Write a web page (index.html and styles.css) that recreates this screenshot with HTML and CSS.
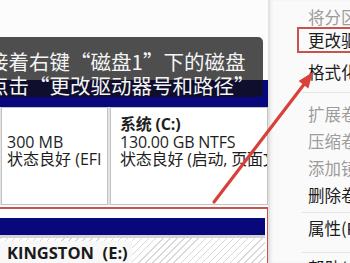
FILE: index.html
```html
<!DOCTYPE html>
<html lang="zh-CN">
<head>
<meta charset="utf-8">
<title>磁盘管理</title>
<link rel="stylesheet" href="styles.css">
</head>
<body>
<div class="screen">
  <div class="disks">
    <div class="top-space"></div>
    <div class="bar"></div>
    <div class="parts">
      <div class="part efi">
        <div class="line">&nbsp;</div>
        <div class="line">300 MB</div>
        <div class="line">状态良好 (EFI</div>
      </div>
      <div class="part sys">
        <div class="line bold">系统 (C:)</div>
        <div class="line">130.00 GB NTFS</div>
        <div class="line">状态良好 (启动, 页面文件, 故障转储, 基本数据分区)</div>
      </div>
    </div>
    <div class="disk2">
      <div class="bar bar2"></div>
      <div class="hatch">
        <span class="label">KINGSTON  (E:)</span>
      </div>
    </div>
  </div>
  <div class="menu">
    <div class="item dis first">将分区标记为活动分区(M)</div>
    <div class="item hl">更改驱动器号和路径(C)...</div>
    <div class="item third">格式化(F)...</div>
    <div class="sep s1"></div>
    <div class="item dis">扩展卷(X)...</div>
    <div class="item dis">压缩卷(H)...</div>
    <div class="item dis">添加镜像(A)...</div>
    <div class="item">删除卷(D)...</div>
    <div class="sep s2"></div>
    <div class="item">属性(P)</div>
    <div class="sep s3"></div>
    <div class="item">帮助(H)</div>
  </div>
  <div class="caption">
    <div class="cap-line">接着右键“磁盘1”下的磁盘</div>
    <div class="cap-line">点击“更改驱动器号和路径”</div>
  </div>
  <svg class="arrow" width="350" height="263" viewBox="0 0 350 263">
    <line x1="214" y1="202" x2="303.5" y2="85" stroke="#d8413a" stroke-width="3.2" stroke-linecap="round"/>
    <polygon points="313,72 308.3,88.4 298.6,81" fill="#d8413a"/>
  </svg>
</div>
</body>
</html>
```
FILE: styles.css
```css
html, body {
  margin: 0;
  padding: 0;
}
body {
  width: 350px;
  height: 263px;
  overflow: hidden;
  background: #fbfbfb;
}
.screen {
  position: relative;
  display: flex;
  width: 350px;
  height: 263px;
  overflow: hidden;
}
.disks {
  width: 268px;
  flex: none;
  display: flex;
  flex-direction: column;
  background: #fcfcfc;
}
.top-space {
  height: 80px;
  flex: none;
}
.bar {
  height: 27px;
  flex: none;
  background: #08087c;
}
.parts {
  display: flex;
  gap: 2px;
  height: 98px;
  flex: none;
  margin-bottom: 2px;
  background: #e4e4e4;
}
.part {
  border: 1px solid #c2c2c2;
  background: #ffffff;
  padding-top: 8px;
  font-family: "Open Sans", "Noto Sans CJK SC", sans-serif;
  font-size: 16px;
  line-height: 17.5px;
  color: #1e1e1e;
  white-space: nowrap;
  overflow: hidden;
}
.part.efi {
  width: 100px;
  flex: none;
  padding-left: 5px;
  margin-left: 1px;
}
.part.sys {
  flex: 1;
  padding-left: 9px;
  letter-spacing: -0.2px;
}
.bold {
  font-weight: 700;
}
.disk2 {
  flex: 1;
  width: 265px;
  border-top: 2px solid #c8524c;
  border-right: 2px solid #c8524c;
  padding-top: 9px;
  padding-right: 2px;
  display: flex;
  flex-direction: column;
  background: #fdfdfd;
}
.bar2 {
  height: 17px;
}
.hatch {
  flex: 1;
  border-top: 3px solid #d2d2d2;
  background: repeating-linear-gradient(135deg, #d9d9d9 0 1px, #ffffff 1px 5px);
  padding-top: 3px;
}
.label {
  display: inline-block;
  background: #f8f8f8;
  padding: 0 4px 0 7px;
  font-family: "Open Sans", "Noto Sans CJK SC", sans-serif;
  font-weight: 700;
  font-size: 16.5px;
  line-height: 24px;
  color: #1a1a1a;
  white-space: pre;
}
.menu {
  flex: 1;
  background: #fafafa;
  border-left: 2px solid #e2e2e2;
  box-shadow: inset 2px 0 3px rgba(0,0,0,0.05);
  font-family: "Noto Sans CJK SC", sans-serif;
  font-size: 16.5px;
  color: #1c1c1c;
  white-space: nowrap;
  overflow: hidden;
}
.item {
  height: 27px;
  line-height: 27px;
  padding-left: 38px;
}
.item.dis {
  color: #9c9c9c;
}
.item.first {
  margin-top: 5px;
  height: 22px;
  line-height: 24px;
}
.item.hl {
  height: 22px;
  line-height: 22px;
  margin-left: 27px;
  padding-left: 9px;
  border: 2px solid #c8524c;
  border-right: 0;
}
.item.third {
  margin-top: 6px;
}
.sep {
  height: 1px;
  margin-left: 32px;
  background: #e4e4e4;
}
.sep.s1 {
  margin-top: 6px;
  margin-bottom: 8px;
}
.sep.s2 {
  margin-top: 3px;
  margin-bottom: 2px;
}
.sep.s3 {
  margin-top: 10px;
  margin-bottom: 2px;
}
.caption {
  position: absolute;
  left: -20px;
  top: 37px;
  width: 275px;
  height: 48px;
  padding: 12px 0 0 8px;
  border-radius: 0 5px 5px 0;
  background: rgba(18, 18, 18, 0.74);
  font-family: "Noto Sans CJK SC", sans-serif;
  font-size: 20.5px;
  line-height: 24px;
  color: #f5f5f5;
  white-space: nowrap;
}
.arrow {
  position: absolute;
  left: 0;
  top: 0;
  pointer-events: none;
}
```
